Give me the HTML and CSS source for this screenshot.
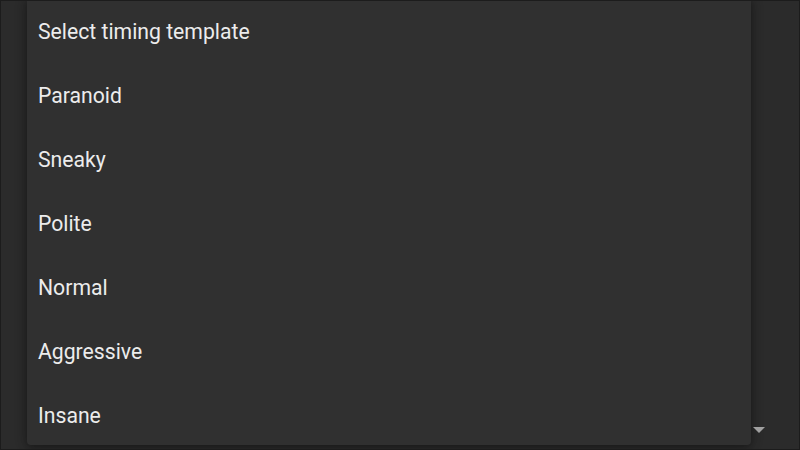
FILE: index.html
```html
<!DOCTYPE html>
<html>
<head>
<meta charset="utf-8">
<link rel="stylesheet" href="styles.css">
</head>
<body>
<div class="screen">
  <div class="menu">
    <div class="item">Select timing template</div>
    <div class="item">Paranoid</div>
    <div class="item">Sneaky</div>
    <div class="item">Polite</div>
    <div class="item">Normal</div>
    <div class="item">Aggressive</div>
    <div class="item">Insane</div>
  </div>
  <div class="arrow"></div>
</div>
</body>
</html>
```
FILE: styles.css
```css
html, body {
  margin: 0;
  padding: 0;
  background: #2a2a2a;
}
.screen {
  position: relative;
  width: 800px;
  height: 450px;
  box-sizing: border-box;
  border: 1px solid #1c1c1c;
  background: #2b2b2b;
  overflow: hidden;
  padding-left: 26px;
}
.menu {
  width: 724px;
  height: 445px;
  margin-top: -1px;
  background: #303030;
  border-radius: 0 0 4px 4px;
  box-shadow: 0 2px 8px rgba(0,0,0,0.35), 0 0 14px rgba(0,0,0,0.2);
  overflow: hidden;
  display: flex;
  flex-direction: column;
}
.item {
  flex: 0 0 64px;
  height: 64px;
  display: flex;
  align-items: center;
  padding-left: 11px;
  padding-bottom: 2px;
  box-sizing: border-box;
  font-family: Roboto, "Noto Sans", sans-serif;
  font-size: 21.2px;
  color: #ececec;
}
.arrow {
  position: absolute;
  left: 752px;
  top: 426px;
  width: 0;
  height: 0;
  border-left: 6px solid transparent;
  border-right: 6px solid transparent;
  border-top: 6px solid #a0a0a0;
}
```
